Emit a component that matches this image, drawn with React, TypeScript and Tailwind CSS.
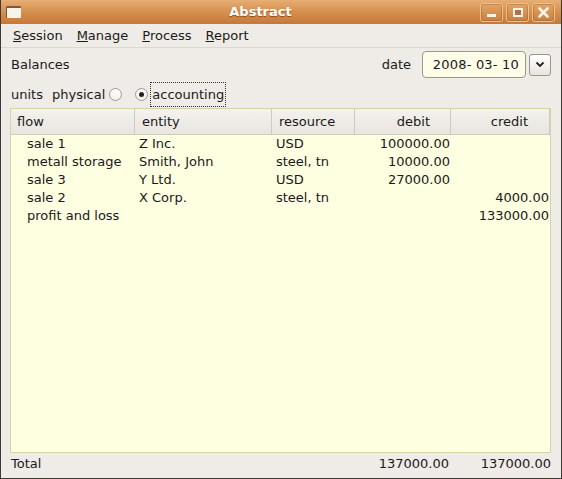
const rows = [
  { flow: 'sale 1', entity: 'Z Inc.', resource: 'USD', debit: '100000.00', credit: '' },
  { flow: 'metall storage', entity: 'Smith, John', resource: 'steel, tn', debit: '10000.00', credit: '' },
  { flow: 'sale 3', entity: 'Y Ltd.', resource: 'USD', debit: '27000.00', credit: '' },
  { flow: 'sale 2', entity: 'X Corp.', resource: 'steel, tn', debit: '', credit: '4000.00' },
  { flow: 'profit and loss', entity: '', resource: '', debit: '', credit: '133000.00' },
];

function TitleButton({ children }: { children: React.ReactNode }) {
  return (
    <div className="w-[23px] h-[19px] rounded-[3px] border border-[#f0c08c] bg-gradient-to-b from-[#e2a567] to-[#c9803f] flex items-center justify-center shadow-[inset_0_0_0_1px_rgba(120,60,10,0.25)]">
      {children}
    </div>
  );
}

function Radio({ checked }: { checked?: boolean }) {
  return (
    <span className="w-[13px] h-[13px] rounded-full border border-[#9d9a92] bg-gradient-to-b from-white to-[#f1efeb] flex items-center justify-center">
      {checked && <span className="w-[5px] h-[5px] rounded-full bg-[#222]" />}
    </span>
  );
}

export default function App() {
  const font = { fontFamily: '"DejaVu Sans", Verdana, sans-serif' };
  return (
    <div className="w-[562px] h-[479px] flex flex-col bg-[#efebe7] text-[13px] text-[#1a1a1a] border-x border-b border-[#3d3a36] overflow-hidden" style={font}>
      {/* Title bar */}
      <div className="relative h-[24px] shrink-0 bg-gradient-to-b from-[#e6ae75] via-[#d68f4c] to-[#c4793a] flex items-center px-[5px]">
        <div className="w-[15px] h-[12px] bg-[#f7f2ea] border-t-2 border-l border-[#7a5a3a] rounded-[1px]" />
        <div className="flex-1 text-center font-bold text-white [text-shadow:0_1px_1px_rgba(90,40,0,0.6)] pl-[20px]">Abstract</div>
        <div className="flex gap-[3px] pr-[1px]">
          <TitleButton>
            <span className="w-[9px] h-[3px] bg-[#fbf1e4] mt-[6px]" />
          </TitleButton>
          <TitleButton>
            <span className="w-[10px] h-[9px] border-2 border-[#fbf1e4] bg-[#b07240]" />
          </TitleButton>
          <TitleButton>
            <svg width="11" height="11" viewBox="0 0 11 11">
              <path d="M1.5 1.5L9.5 9.5M9.5 1.5L1.5 9.5" stroke="#fbf1e4" strokeWidth="2.6" strokeLinecap="round" />
            </svg>
          </TitleButton>
        </div>
      </div>

      {/* Menu bar */}
      <div className="h-[24px] shrink-0 flex items-center pl-[12px] gap-[14px] pt-[1px] border-b border-[#dcd7d0]">
        <span><span className="underline">S</span>ession</span>
        <span><span className="underline">M</span>anage</span>
        <span><span className="underline">P</span>rocess</span>
        <span><span className="underline">R</span>eport</span>
      </div>

      {/* Content */}
      <div className="flex-1 flex flex-col px-[9px]">
        <div className="h-[31px] flex items-center pt-[2px]">
          <span className="pl-[1px]">Balances</span>
          <span className="ml-auto mr-[11px]">date</span>
          <div className="w-[104px] h-[27px] rounded-[4px] border border-[#9a978c] bg-[#fdfde8] flex items-center justify-end pr-[6px] tracking-[0.2px]">
            2008- 03- 10
          </div>
          <div className="ml-[3px] w-[22px] h-[22px] rounded-[3px] border border-[#9a978c] bg-gradient-to-b from-white to-[#e8e4de] flex items-center justify-center">
            <svg width="10" height="7" viewBox="0 0 10 7">
              <path d="M1.5 1.5L5 5L8.5 1.5" stroke="#222" strokeWidth="1.8" fill="none" />
            </svg>
          </div>
          <span className="w-[1px]" />
        </div>

        <div className="h-[28px] flex items-center pt-[3px]">
          <span className="pl-[1px]">units</span>
          <span className="ml-[9px]">physical</span>
          <span className="ml-[4px]"><Radio /></span>
          <span className="ml-[13px]"><Radio checked /></span>
          <span className="ml-[2px] px-[1px] py-[2px] border border-dotted border-[#333]">accounting</span>
        </div>

        {/* Table */}
        <div className="mt-[1px] flex-1 flex flex-col border border-[#d5d4a6] bg-[#fefee0] mr-[1px]">
          <div className="h-[26px] shrink-0 grid grid-cols-[124px_137px_83px_96px_1fr] bg-gradient-to-b from-[#f4f2ee] to-[#e9e5df] border-b border-[#cfcabf] items-stretch">
            <div className="flex items-center pl-[6px] border-r border-[#cfcabf]">flow</div>
            <div className="flex items-center pl-[7px] border-r border-[#cfcabf]">entity</div>
            <div className="flex items-center pl-[7px] border-r border-[#cfcabf]">resource</div>
            <div className="flex items-center justify-end pr-[20px] border-r border-[#cfcabf]">debit</div>
            <div className="flex items-center justify-end pr-[21px] border-r border-[#cfcabf]">credit</div>
          </div>
          <div>
            {rows.map((r) => (
              <div key={r.flow} className="h-[18px] grid grid-cols-[124px_137px_83px_96px_1fr] items-center leading-[18px]">
                <div className="pl-[16px]">{r.flow}</div>
                <div className="pl-[4px]">{r.entity}</div>
                <div className="pl-[4px]">{r.resource}</div>
                <div className="text-right pr-[1px]">{r.debit}</div>
                <div className="text-right pr-[1px]">{r.credit}</div>
              </div>
            ))}
          </div>
        </div>

        <div className="h-[22px] shrink-0 grid grid-cols-[124px_137px_83px_96px_1fr] items-center mb-[3px]">
          <div className="pl-[1px]">Total</div>
          <div />
          <div />
          <div className="text-right pr-[1px]">137000.00</div>
          <div className="text-right pr-[1px]">137000.00</div>
        </div>
      </div>
    </div>
  );
}
